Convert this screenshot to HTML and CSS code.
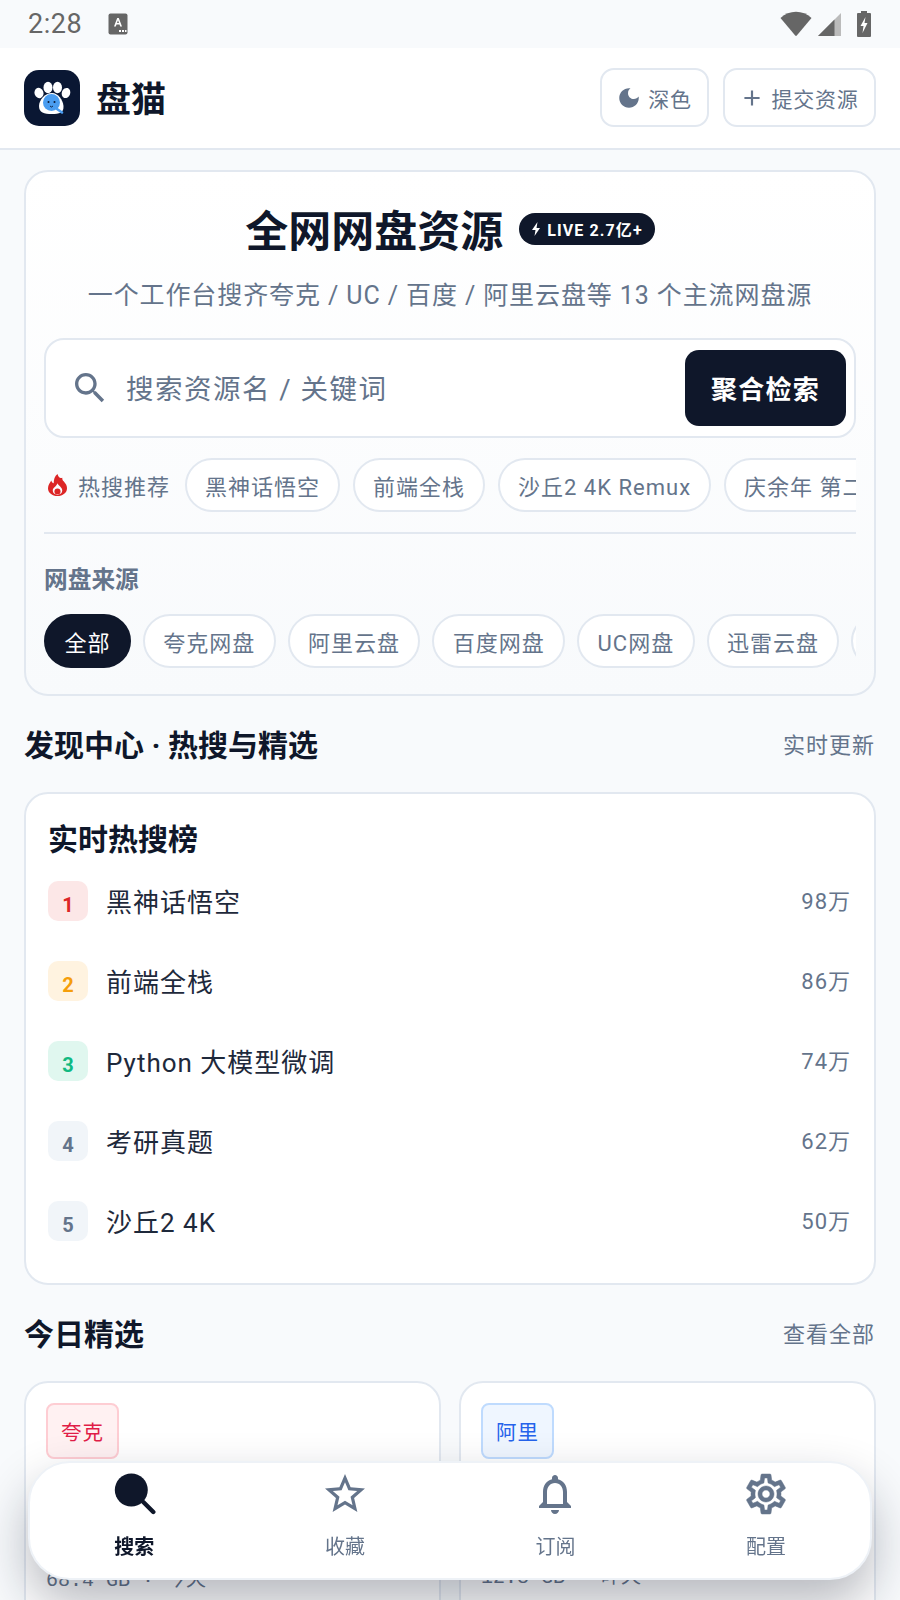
FILE: index.html
```html
<!doctype html>

<html lang="zh-CN">
<head>
  <meta charset="utf-8">
  <title>盘猫</title>
  <link rel="stylesheet" href="styles.css">
</head>
<body>
<div class="status-bar">
  <span class="status-time">2:28</span>
  <svg class="status-a" width="20" height="22" viewBox="0 0 20 22">
    <rect x="0.5" y="0.5" width="19" height="21" rx="2" fill="#666"/>
    <path d="M6 13.5 L9.2 5 H10.8 L14 13.5 H12.2 L11.5 11.5 H8.5 L7.8 13.5 Z M9 10 H11 L10 7.2 Z" fill="#fff" fill-rule="evenodd"/>
    <rect x="11" y="17" width="2" height="2" fill="#fff"/><rect x="14" y="17" width="2" height="2" fill="#fff"/><rect x="17" y="17" width="1.5" height="2" fill="#fff"/>
  </svg>
  <div class="status-right">
    <svg width="32" height="26" viewBox="0 0 32 26"><path d="M0.5 7 C9 -1.5 23 -1.5 31.5 7 L16.8 24.6 Q16 25.4 15.2 24.6 Z" fill="#666"/></svg>
    <svg class="status-signal" width="23" height="23" viewBox="0 0 23 23"><path d="M23 0 V23 H0 Z" fill="#bbb"/><path d="M16.5 6.5 V23 H0 Z" fill="#666"/></svg>
    <svg class="status-batt" width="14" height="26" viewBox="0 0 14 26"><path d="M4 0 H10 V2 H13 Q14 2 14 3 V25 Q14 26 13 26 H1 Q0 26 0 25 V3 Q0 2 1 2 H4 Z" fill="#666"/><path d="M8.5 6 L3.5 15 H6.5 L5.5 22 L10.5 12 H7.5 Z" fill="#fff"/></svg>
  </div>
</div>

<header class="topbar">
  <svg class="logo" width="56" height="56" viewBox="0 0 56 56">
    <rect width="56" height="56" rx="15" fill="#0a1733"/>
    <ellipse cx="15" cy="23" rx="4.500" ry="5.200" transform="rotate(-20 15 23)" fill="#fff"/>
    <ellipse cx="24" cy="17.500" rx="4.500" ry="5.800" fill="#fff"/>
    <ellipse cx="33.500" cy="17.500" rx="4.500" ry="5.800" fill="#fff"/>
    <ellipse cx="42" cy="23" rx="4.200" ry="5.200" transform="rotate(20 42 23)" fill="#fff"/>
    <path d="M28 23 C34 23 39 30 39.500 36 C40 43 35 44 28 44 C20 44 15 42.500 15 36 C15 30 21 23 28 23 Z" fill="#fff"/>
    <circle cx="27.500" cy="32.500" r="8.500" fill="#4a9df0"/>
    <path d="M33 39 L38 42.500" stroke="#4a9df0" stroke-width="2.600" stroke-linecap="round"/>
    <circle cx="24.500" cy="32" r="1" fill="#0a1733"/><circle cx="30.500" cy="32" r="1" fill="#0a1733"/>
    <path d="M26 36 L27.500 37 L29 36" fill="none" stroke="#0a1733" stroke-width="0.900"/>
  </svg>
  <div class="brand">盘猫</div>
  <div class="top-actions">
    <button class="top-btn">
      <svg width="26" height="26" viewBox="0 0 24 24"><path d="M12 3c-4.970 0-9 4.030-9 9s4.030 9 9 9 9-4.030 9-9c0-.46-.04-.92-.1-1.360-.98 1.370-2.580 2.260-4.400 2.260-2.980 0-5.400-2.420-5.400-5.400 0-1.810.89-3.420 2.260-4.400-.44-.06-.9-.1-1.360-.1z" fill="#64748b"/></svg>
      深色
    </button>
    <button class="top-btn top-btn-wide">
      <svg width="26" height="26" viewBox="0 0 24 24"><path d="M19 13h-6v6h-2v-6H5v-2h6V5h2v6h6v2z" fill="#64748b"/></svg>
      提交资源
    </button>
  </div>
</header>

<main class="page">
  <section class="hero">
    <div class="hero-head">
      <h1>全网网盘资源</h1>
      <span class="live-badge">
        <svg width="10" height="14" viewBox="0 0 10 14"><path d="M6.500 0 L1 8 H4.500 L3.500 14 L9 6 H5.500 Z" fill="#fff"/></svg>
        LIVE 2.7亿+
      </span>
    </div>
    <p class="hero-sub">一个工作台搜齐夸克 / UC / 百度 / 阿里云盘等 13 个主流网盘源</p>

    <div class="searchbox">
      <svg class="search-ico" width="40" height="40" viewBox="0 0 24 24"><path d="M15.500 14h-.79l-.28-.27C15.410 12.590 16 11.110 16 9.500 16 5.910 13.090 3 9.500 3S3 5.910 3 9.500 5.910 16 9.500 16c1.610 0 3.090-.59 4.230-1.570l.27.28v.79l5 4.990L20.490 19l-4.990-5zm-6 0C7.010 14 5 11.990 5 9.500S7.010 5 9.500 5 14 7.010 14 9.500 11.990 14 9.500 14z" fill="#64748b"/></svg>
      <span class="search-text">搜索资源名 / 关键词</span>
      <button class="search-btn">聚合检索</button>
    </div>

    <div class="hot-row">
      <div class="hot-label">
        <svg width="19" height="22" viewBox="0 0 20 24" preserveAspectRatio="none"><path d="M10 0 C11 4 13 5 15 4 C15 6 15.500 7 16.500 8 C19 11 20 13 20 15.500 C20 20.500 15.500 24 10 24 C4.500 24 0 20.500 0 15.500 C0 12 2 9.500 3.500 7 C4 9 5 10 6 10 C6 6 7 2 10 0 Z" fill="#dc2626"/><path d="M10 10 C11 13 15 14 15 18 C15 21 13 22.500 10 22.500 C7 22.500 5 21 5 18 C5 14.500 9 13.500 10 10 Z" fill="#fbfcfe"/><circle cx="10" cy="19" r="3.200" fill="#dc2626"/></svg>
        热搜推荐
      </div>
      <div class="chips chips-hot">
        <span class="chip">黑神话悟空</span>
        <span class="chip">前端全栈</span>
        <span class="chip">沙丘2 4K Remux</span>
        <span class="chip">庆余年 第二季</span>
      </div>
    </div>

    <div class="divider"></div>

    <h3 class="src-title">网盘来源</h3>
    <div class="chips chips-src">
      <span class="chip chip-on">全部</span>
      <span class="chip">夸克网盘</span>
      <span class="chip">阿里云盘</span>
      <span class="chip">百度网盘</span>
      <span class="chip">UC网盘</span>
      <span class="chip">迅雷云盘</span>
      <span class="chip">天翼云盘</span>
    </div>
  </section>

  <div class="sec-head">
    <h2>发现中心 · 热搜与精选</h2>
    <span>实时更新</span>
  </div>

  <section class="rank-card">
    <h3>实时热搜榜</h3>
    <div class="rank-row"><span class="rank-no rank-1">1</span><span class="rank-name">黑神话悟空</span><span class="rank-val">98万</span></div>
    <div class="rank-row"><span class="rank-no rank-2">2</span><span class="rank-name">前端全栈</span><span class="rank-val">86万</span></div>
    <div class="rank-row"><span class="rank-no rank-3">3</span><span class="rank-name">Python 大模型微调</span><span class="rank-val">74万</span></div>
    <div class="rank-row"><span class="rank-no">4</span><span class="rank-name">考研真题</span><span class="rank-val">62万</span></div>
    <div class="rank-row"><span class="rank-no">5</span><span class="rank-name">沙丘2 4K</span><span class="rank-val">50万</span></div>
  </section>

  <div class="sec-head">
    <h2>今日精选</h2>
    <span>查看全部</span>
  </div>

  <section class="picks">
    <article class="pick">
      <span class="tag tag-quark">夸克</span>
      <div class="pick-meta">68.4 GB · 今天</div>
    </article>
    <article class="pick">
      <span class="tag tag-ali">阿里</span>
      <div class="pick-meta pick-meta-up">12.8 GB · 昨天</div>
    </article>
  </section>
</main>

<nav class="tabbar">
  <div class="tab tab-on">
    <svg width="44" height="44" viewBox="0 0 44 44"><circle cx="19.300" cy="18" r="16.500" fill="#0f172a"/><path d="M31.300 30 L41.300 40" stroke="#0f172a" stroke-width="4.400" stroke-linecap="round"/></svg>
    <span>搜索</span>
  </div>
  <div class="tab">
    <svg width="44" height="44" viewBox="1 1 22 22"><path d="M22 9.240l-7.190-.62L12 2 9.190 8.630 2 9.240l5.460 4.730L5.820 21 12 17.270 18.180 21l-1.630-7.030L22 9.240zM12 15.400l-3.760 2.270 1-4.280-3.320-2.880 4.380-.38L12 6.100l1.710 4.040 4.380.38-3.320 2.880 1 4.280L12 15.400z" fill="#64748b"/></svg>
    <span>收藏</span>
  </div>
  <div class="tab">
    <svg width="44" height="44" viewBox="1 1 22 22"><path d="M12 22c1.100 0 2-.9 2-2h-4c0 1.100.89 2 2 2zm6-6v-5c0-3.070-1.640-5.640-4.500-6.320V4c0-.83-.67-1.500-1.500-1.500s-1.500.67-1.500 1.500v.68C7.630 5.360 6 7.920 6 11v5l-2 2v1h16v-1l-2-2zm-2 1H8v-6c0-2.480 1.510-4.500 4-4.500s4 2.020 4 4.500v6z" fill="#64748b"/></svg>
    <span>订阅</span>
  </div>
  <div class="tab">
    <svg width="44" height="44" viewBox="1 1 22 22"><path d="M19.430 12.980c.04-.32.07-.64.07-.98 0-.34-.03-.66-.07-.98l2.110-1.650c.19-.15.24-.42.12-.64l-2-3.460c-.09-.16-.26-.25-.44-.25-.06 0-.12.01-.17.03l-2.490 1c-.52-.4-1.080-.73-1.690-.98l-.38-2.650C14.460 2.180 14.250 2 14 2h-4c-.25 0-.46.18-.49.42l-.38 2.650c-.61.25-1.170.59-1.690.98l-2.490-1c-.06-.02-.12-.03-.18-.03-.17 0-.34.09-.43.25l-2 3.460c-.13.22-.07.49.12.64l2.110 1.650c-.04.32-.07.65-.07.98 0 .33.03.66.07.98l-2.110 1.650c-.19.15-.24.42-.12.64l2 3.460c.09.16.26.25.44.25.06 0 .12-.01.17-.03l2.490-1c.52.4 1.080.73 1.690.98l.38 2.650c.03.24.24.42.49.42h4c.25 0 .46-.18.49-.42l.38-2.650c.61-.25 1.170-.59 1.690-.98l2.490 1c.06.02.12.03.18.03.17 0 .34-.09.43-.25l2-3.460c.12-.22.07-.49-.12-.64l-2.110-1.650zm-1.980-1.710c.04.31.05.52.05.73 0 .21-.02.43-.05.73l-.14 1.130.89.7 1.080.84-.7 1.210-1.270-.51-1.040-.42-.9.68c-.43.32-.84.56-1.250.73l-1.060.43-.16 1.130-.2 1.350h-1.400l-.19-1.350-.16-1.130-1.060-.43c-.43-.18-.83-.41-1.230-.71l-.91-.7-1.060.43-1.270.51-.7-1.210 1.080-.84.89-.7-.14-1.130c-.03-.31-.05-.54-.05-.74s.02-.43.05-.73l.14-1.130-.89-.7-1.080-.84.7-1.210 1.270.51 1.040.42.9-.68c.43-.32.84-.56 1.250-.73l1.060-.43.16-1.130.2-1.350h1.390l.19 1.350.16 1.130 1.060.43c.43.18.83.41 1.230.71l.91.7 1.060-.43 1.270-.51.7 1.210-1.070.85-.89.7.14 1.130zM12 8c-2.210 0-4 1.790-4 4s1.790 4 4 4 4-1.790 4-4-1.790-4-4-4zm0 6c-1.100 0-2-.9-2-2s.9-2 2-2 2 .9 2 2-.9 2-2 2z" fill="#64748b" stroke="#64748b" stroke-width=".25"/></svg>
    <span>配置</span>
  </div>
</nav>
</body>
</html>
```
FILE: styles.css
```css
* {
  box-sizing: border-box;
}

html, body {
  margin: 0;
  padding: 0;
  height: 1600px;
  overflow: hidden;
}

body {
  background: #f8fafc;
  color: #0f172a;
  font-family: Roboto, "Noto Sans CJK SC", sans-serif;
}

h1, h2, h3, p {
  margin: 0;
}

button {
  font-family: inherit;
  cursor: pointer;
}

/* Status bar */
.status-bar {
  height: 48px;
  display: flex;
  align-items: center;
  padding: 0 29px 0 28px;
  background: #f8fafc;
}
.status-time {
  font-size: 27px;
  color: #666;
  letter-spacing: .5px;
}
.status-a {
  margin-left: 26px;
}
.status-right {
  margin-left: auto;
  display: flex;
  align-items: center;
  gap: 6px;
}
.status-batt {
  margin-left: 10px;
}

/* Top bar */
.topbar {
  height: 102px;
  display: flex;
  align-items: center;
  padding: 0 24px;
  background: #fff;
  border-bottom: 2px solid #e2e8f0;
}
.brand {
  margin-left: 16px;
  padding-bottom: 3px;
  font-size: 35px;
  font-weight: 700;
}
.top-actions {
  margin-left: auto;
  margin-bottom: 1px;
  display: flex;
  gap: 14px;
}
.top-btn {
  height: 59px;
  width: 109px;
  display: flex;
  align-items: center;
  justify-content: center;
  gap: 6px;
  padding: 0 1px 0 0;
  background: #fff;
  border: 2px solid #e2e8f0;
  border-radius: 14px;
  color: #64748b;
  font-size: 21px;
  letter-spacing: .8px;
}
.top-btn-wide {
  width: 153px;
}

/* Page */
.page {
  height: 1450px;
  padding: 20px 24px 0;
  overflow: hidden;
}

/* Hero */
.hero {
  height: 526px;
  padding: 31px 18px 0;
  border: 2px solid #e2e8f0;
  border-radius: 24px;
  background: linear-gradient(180deg, #fff 0%, #f8fafc 100%);
}
.hero-head {
  display: flex;
  align-items: center;
  justify-content: center;
  gap: 16px;
  height: 58px;
}
.hero-head h1 {
  font-size: 43px;
  font-weight: 700;
  line-height: 58px;
}
.live-badge {
  display: inline-flex;
  align-items: center;
  gap: 6px;
  height: 32px;
  margin-bottom: 6px;
  padding: 0 12px;
  border-radius: 16px;
  background: #0f172a;
  color: #fff;
  font-size: 16px;
  font-weight: 700;
  letter-spacing: 1.100px;
}
.hero-sub {
  margin-top: 17px;
  text-align: center;
  color: #64748b;
  font-size: 25px;
  line-height: 36px;
  letter-spacing: .9px;
}

/* Search */
.searchbox {
  margin-top: 24px;
  height: 100px;
  display: flex;
  align-items: center;
  padding: 0 8px 0 24px;
  background: #fff;
  border: 2px solid #e2e8f0;
  border-radius: 20px;
}
.search-ico {
  flex: none;
}
.search-text {
  margin-left: 16px;
  padding-bottom: 2px;
  color: #64748b;
  font-size: 27.500px;
  letter-spacing: 1.500px;
}
.search-btn {
  margin-left: auto;
  width: 161px;
  height: 76px;
  padding: 0 0 2px;
  background: #0f172a;
  color: #fff;
  border: 0;
  border-radius: 14px;
  font-size: 26px;
  font-weight: 700;
  letter-spacing: 1.300px;
}

/* Hot row */
.hot-row {
  margin-top: 20px;
  display: flex;
  align-items: center;
  gap: 15px;
}
.hot-label {
  flex: none;
  display: flex;
  align-items: center;
  gap: 11px;
  padding-left: 4px;
  color: #64748b;
  font-size: 22px;
  letter-spacing: 1px;
}
.chips {
  display: flex;
  gap: 12px;
  min-width: 0;
  flex: 1;
  overflow: hidden;
}
.chips-hot {
  gap: 13px;
}
.chip {
  flex: none;
  height: 54px;
  display: flex;
  align-items: center;
  padding: 0 18px;
  background: #fff;
  border: 2px solid #e2e8f0;
  border-radius: 27px;
  color: #64748b;
  font-size: 22px;
  letter-spacing: 1px;
  white-space: nowrap;
}
.chips-src .chip {
  padding: 0 18.400px;
}
.chip-on {
  background: #0f172a;
  border-color: #0f172a;
  color: #fff;
}
.divider {
  height: 2px;
  margin-top: 20px;
  background: #e2e8f0;
}
.src-title {
  margin-top: 30px;
  color: #64748b;
  font-size: 23.700px;
  font-weight: 700;
  line-height: 32px;
}
.chips-src {
  margin-top: 18px;
}

/* Section heads */
.sec-head {
  display: flex;
  align-items: center;
  justify-content: space-between;
  height: 44px;
  margin-top: 26px;
  padding-right: 1px;
  padding-bottom: 2px;
}
.sec-head h2 {
  font-size: 30px;
  font-weight: 700;
}
.sec-head span {
  color: #64748b;
  font-size: 22px;
  letter-spacing: 1px;
}

/* Rank card */
.rank-card {
  margin-top: 26px;
  height: 493px;
  padding: 25px 23px 0 22px;
  background: #fff;
  border: 2px solid #e2e8f0;
  border-radius: 24px;
}
.rank-card h3 {
  font-size: 30px;
  font-weight: 700;
  line-height: 42px;
}
.rank-row {
  height: 80px;
  display: flex;
  align-items: flex-start;
}
.rank-row:first-of-type {
  margin-top: 20px;
}
.rank-no {
  flex: none;
  width: 40px;
  height: 40px;
  padding-top: 8px;
  display: flex;
  align-items: center;
  justify-content: center;
  background: #f1f5f9;
  border-radius: 10px;
  color: #64748b;
  font-size: 20px;
  font-weight: 700;
}
.rank-1 {
  background: #fce7e7;
  color: #dc2626;
}
.rank-2 {
  background: #fff3e0;
  color: #f59e0b;
}
.rank-3 {
  background: #e0f7ef;
  color: #10b981;
}
.rank-name {
  margin-left: 18px;
  font-size: 26px;
  line-height: 44px;
  color: #1e293b;
  letter-spacing: 1px;
}
.rank-val {
  margin-left: auto;
  color: #64748b;
  font-size: 22px;
  line-height: 42px;
  letter-spacing: 1px;
}

/* Picks */
.picks {
  margin-top: 26px;
  display: grid;
  grid-template-columns: 1fr 1fr;
  gap: 18px;
}
.pick {
  height: 300px;
  padding: 20px 20px 0;
  background: #fff;
  border: 2px solid #e2e8f0;
  border-radius: 24px;
}
.tag {
  display: flex;
  align-items: center;
  justify-content: center;
  width: 73px;
  height: 56px;
  border: 2px solid;
  border-radius: 8px;
  font-size: 20.500px;
  letter-spacing: 1px;
}
.tag-quark {
  background: #fff1f2;
  border-color: #fecdd3;
  color: #e11d48;
}
.tag-ali {
  background: #eff6ff;
  border-color: #bfdbfe;
  color: #2563eb;
}
.pick-meta {
  margin-top: 107px;
  color: #64748b;
  font-family: "Liberation Mono", "Noto Sans CJK SC", monospace;
  font-size: 20px;
  line-height: 30px;
  white-space: nowrap;
}
.pick-meta-up {
  margin-top: 104px;
}

/* Bottom tabs */
.tabbar {
  position: fixed;
  left: 28px;
  top: 1461px;
  width: 844px;
  height: 119px;
  display: grid;
  grid-template-columns: repeat(4, 210.600px);
  background: #fff;
  border: 2px solid #eef2f7;
  border-radius: 42px;
  box-shadow: 0 24px 50px rgba(15, 23, 42, .3);
}
.tab {
  display: flex;
  flex-direction: column;
  align-items: center;
  color: #64748b;
  font-size: 20px;
  padding-top: 9px;
  padding-right: 2px;
}
.tab span {
  margin-top: 16px;
  line-height: 30px;
}
.tab-on {
  color: #0f172a;
  font-weight: 600;
}
```
